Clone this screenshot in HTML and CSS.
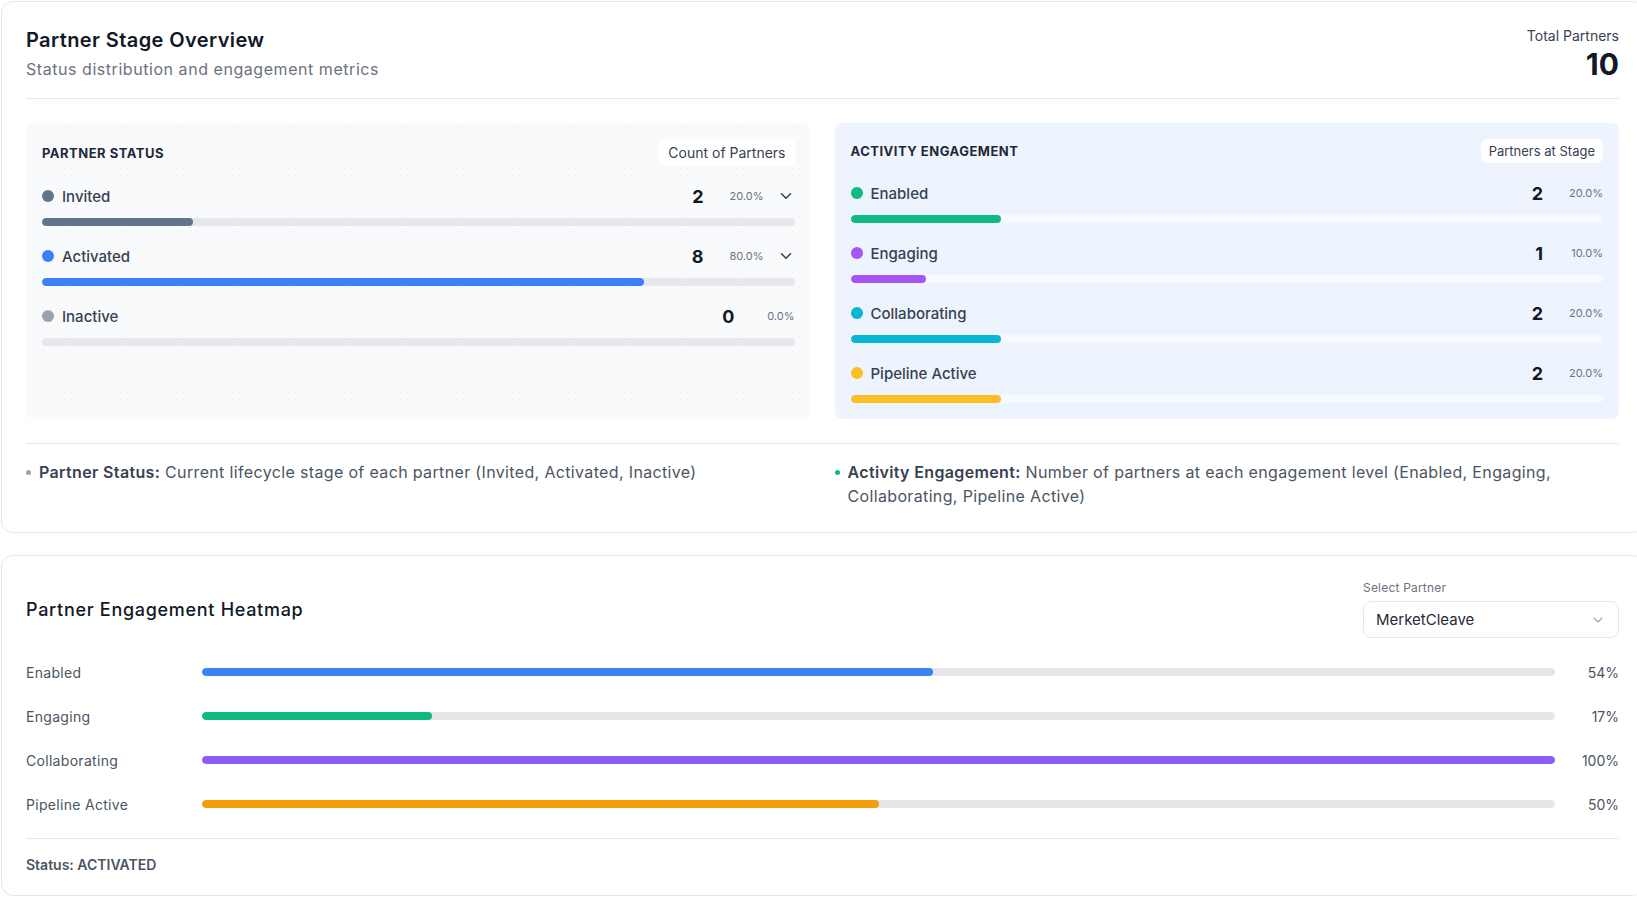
FILE: index.html
```html
<!DOCTYPE html>
<html lang="en">
<head>
<meta charset="utf-8">
<title>Partner Stage Overview</title>
<link rel="stylesheet" href="styles.css">
</head>
<body>
<div class="page">
  <section class="card overview">
    <header class="ov-header">
      <div class="ov-heading">
        <h1 class="ov-title">Partner Stage Overview</h1>
        <p class="ov-sub">Status distribution and engagement metrics</p>
      </div>
      <div class="total">
        <div class="total-label">Total Partners</div>
        <div class="total-value">10</div>
      </div>
    </header>

    <div class="panels">
      <div class="panel panel-status">
        <div class="panel-head">
          <h2 class="panel-title">PARTNER STATUS</h2>
          <span class="badge badge-lg">Count of Partners</span>
        </div>
        <div class="rows">
          <div class="stat">
            <div class="stat-line">
              <span class="dot dot-slate"></span>
              <span class="stat-name">Invited</span>
              <span class="stat-count">2</span>
              <span class="stat-pct">20.0%</span>
              <span class="chev"><svg viewBox="0 0 24 24" width="18" height="18"><path d="M6 9l6 6 6-6" fill="none" stroke="currentColor" stroke-width="2" stroke-linecap="round" stroke-linejoin="round"/></svg></span>
            </div>
            <div class="track"><div class="fill fill-slate" style="width:20%"></div></div>
          </div>
          <div class="stat">
            <div class="stat-line">
              <span class="dot dot-blue"></span>
              <span class="stat-name">Activated</span>
              <span class="stat-count">8</span>
              <span class="stat-pct">80.0%</span>
              <span class="chev"><svg viewBox="0 0 24 24" width="18" height="18"><path d="M6 9l6 6 6-6" fill="none" stroke="currentColor" stroke-width="2" stroke-linecap="round" stroke-linejoin="round"/></svg></span>
            </div>
            <div class="track"><div class="fill fill-blue" style="width:80%"></div></div>
          </div>
          <div class="stat">
            <div class="stat-line">
              <span class="dot dot-gray"></span>
              <span class="stat-name">Inactive</span>
              <span class="stat-count">0</span>
              <span class="stat-pct">0.0%</span>
            </div>
            <div class="track"><div class="fill fill-gray" style="width:0%"></div></div>
          </div>
        </div>
      </div>

      <div class="panel panel-activity">
        <div class="panel-head">
          <h2 class="panel-title">ACTIVITY ENGAGEMENT</h2>
          <span class="badge">Partners at Stage</span>
        </div>
        <div class="rows">
          <div class="stat">
            <div class="stat-line">
              <span class="dot dot-green"></span>
              <span class="stat-name">Enabled</span>
              <span class="stat-count">2</span>
              <span class="stat-pct">20.0%</span>
            </div>
            <div class="track track-light"><div class="fill fill-green" style="width:20%"></div></div>
          </div>
          <div class="stat">
            <div class="stat-line">
              <span class="dot dot-purple"></span>
              <span class="stat-name">Engaging</span>
              <span class="stat-count">1</span>
              <span class="stat-pct">10.0%</span>
            </div>
            <div class="track track-light"><div class="fill fill-purple" style="width:10%"></div></div>
          </div>
          <div class="stat">
            <div class="stat-line">
              <span class="dot dot-cyan"></span>
              <span class="stat-name">Collaborating</span>
              <span class="stat-count">2</span>
              <span class="stat-pct">20.0%</span>
            </div>
            <div class="track track-light"><div class="fill fill-cyan" style="width:20%"></div></div>
          </div>
          <div class="stat">
            <div class="stat-line">
              <span class="dot dot-amber"></span>
              <span class="stat-name">Pipeline Active</span>
              <span class="stat-count">2</span>
              <span class="stat-pct">20.0%</span>
            </div>
            <div class="track track-light"><div class="fill fill-amber" style="width:20%"></div></div>
          </div>
        </div>
      </div>
    </div>

    <div class="notes">
      <p class="note"><span class="bullet bullet-gray"></span><span class="note-text"><strong>Partner Status:</strong> Current lifecycle stage of each partner (Invited, Activated, Inactive)</span></p>
      <p class="note"><span class="bullet bullet-green"></span><span class="note-text"><strong>Activity Engagement:</strong> Number of partners at each engagement level (Enabled, Engaging, Collaborating, Pipeline Active)</span></p>
    </div>
  </section>

  <section class="card heatmap">
    <header class="hm-header">
      <h2 class="hm-title">Partner Engagement Heatmap</h2>
      <div class="picker">
        <label class="picker-label">Select Partner</label>
        <div class="select">
          <span class="select-value">MerketCleave</span>
          <svg class="select-chev" viewBox="0 0 24 24" width="16" height="16"><path d="M6 9l6 6 6-6" fill="none" stroke="currentColor" stroke-width="1.6" stroke-linecap="round" stroke-linejoin="round"/></svg>
        </div>
      </div>
    </header>
    <div class="hm-rows">
      <div class="hm-row">
        <span class="hm-label">Enabled</span>
        <div class="hm-track"><div class="hm-fill fill-blue" style="width:54%"></div></div>
        <span class="hm-pct">54%</span>
      </div>
      <div class="hm-row">
        <span class="hm-label">Engaging</span>
        <div class="hm-track"><div class="hm-fill fill-green" style="width:17%"></div></div>
        <span class="hm-pct">17%</span>
      </div>
      <div class="hm-row">
        <span class="hm-label">Collaborating</span>
        <div class="hm-track"><div class="hm-fill fill-violet" style="width:100%"></div></div>
        <span class="hm-pct">100%</span>
      </div>
      <div class="hm-row">
        <span class="hm-label">Pipeline Active</span>
        <div class="hm-track"><div class="hm-fill fill-orange" style="width:50%"></div></div>
        <span class="hm-pct">50%</span>
      </div>
    </div>
    <div class="hm-footer">Status: ACTIVATED</div>
  </section>
</div>
</body>
</html>
```

FILE: styles.css
```css
* { box-sizing: border-box; }
html { overflow: hidden; }
body {
  margin: 0;
  background: #ffffff;
  font-family: Inter, "Noto Sans", "Liberation Sans", sans-serif;
  color: #111827;
}
.page {
  width: 1644px;
  padding: 1px 0 0 1px;
  display: flex;
  flex-direction: column;
  gap: 22px;
}
.card {
  background: #ffffff;
  border: 1px solid #e5e7eb;
  border-radius: 12px;
  padding: 24px;
}

/* ---------- overview header ---------- */
.ov-header {
  display: flex;
  justify-content: space-between;
  align-items: flex-start;
  padding-bottom: 16px;
  border-bottom: 1px solid #e5e7eb;
}
.ov-title {
  margin: 0;
  font-size: 20px;
  line-height: 28px;
  font-weight: 600;
  letter-spacing: 0.4px;
  color: #111827;
}
.ov-sub {
  margin: 3px 0 0;
  font-size: 16px;
  line-height: 24px;
  letter-spacing: 0.55px;
  color: #6b7280;
}
.total { text-align: right; }
.total-label {
  font-size: 14px;
  line-height: 20px;
  color: #374151;
}
.total-value {
  font-size: 30px;
  line-height: 36px;
  font-weight: 700;
  color: #111827;
}

/* ---------- panels ---------- */
.panels {
  margin-top: 24px;
  display: grid;
  grid-template-columns: 1fr 1fr;
  gap: 24px;
}
.panel {
  border-radius: 8px;
  padding: 16px;
}
.panel-status {
  background-color: #f9fafb;
  background-image: radial-gradient(circle, rgba(209, 213, 219, 0.35) 0.8px, transparent 1px);
  background-size: 7px 7px;
}
.panel-activity {
  background: #eef4fe;
}
.panel-head {
  display: flex;
  justify-content: space-between;
  align-items: center;
}
.panel-title {
  margin: 0;
  font-size: 13px;
  font-weight: 700;
  letter-spacing: 0.5px;
  color: #1f2937;
}
.badge {
  background: #ffffff;
  border-radius: 6px;
  font-size: 13px;
  line-height: 16px;
  padding: 4px 8px;
  color: #374151;
}
.badge-lg {
  font-size: 14px;
  line-height: 19px;
  padding: 4px 9px;
}
.rows {
  margin-top: 18px;
  display: flex;
  flex-direction: column;
  gap: 18px;
}
.stat-line {
  display: flex;
  align-items: center;
  height: 24px;
}
.dot {
  width: 12px;
  height: 12px;
  border-radius: 50%;
  flex: none;
}
.dot-slate { background: #64748b; }
.dot-blue { background: #3b82f6; }
.dot-gray { background: #9ca3af; }
.dot-green { background: #10b981; }
.dot-purple { background: #a855f7; }
.dot-cyan { background: #06b6d4; }
.dot-amber { background: #fbbf24; }
.stat-name {
  margin-left: 8px;
  flex: 1;
  font-size: 15px;
  font-weight: 500;
  color: #374151;
}
.stat-count {
  font-size: 18px;
  font-weight: 700;
  color: #111827;
}
.stat-pct {
  min-width: 40px;
  margin-left: 20px;
  text-align: right;
  font-size: 11px;
  color: #6b7280;
}
.chev {
  width: 18px;
  height: 18px;
  margin-left: 13px;
  color: #374151;
  display: flex;
}
.track {
  margin-top: 10px;
  height: 8px;
  border-radius: 4px;
  background: #e5e7eb;
  overflow: hidden;
}
.track-light { background: #f6f9ff; }
.fill {
  height: 100%;
  border-radius: 4px;
}
.fill-slate { background: #64748b; }
.fill-blue { background: #3b82f6; }
.fill-gray { background: #9ca3af; }
.fill-green { background: #10b981; }
.fill-purple { background: #a855f7; }
.fill-cyan { background: #06b6d4; }
.fill-amber { background: #fbbf24; }
.fill-violet { background: #8b5cf6; }
.fill-orange { background: #f59e0b; }

/* ---------- notes ---------- */
.notes {
  margin-top: 24px;
  border-top: 1px solid #e5e7eb;
  padding-top: 16px;
  display: grid;
  grid-template-columns: 1fr 1fr;
  gap: 24px;
}
.note {
  margin: 0;
  display: flex;
  align-items: flex-start;
  gap: 8px;
  font-size: 16px;
  line-height: 24px;
  letter-spacing: 0.35px;
  color: #4b5563;
}
.note strong {
  font-weight: 600;
  color: #374151;
}
.bullet {
  flex: none;
  width: 5px;
  height: 5px;
  border-radius: 50%;
  margin-top: 10px;
}
.bullet-gray { background: #9ca3af; }
.bullet-green { background: #10b981; }

/* ---------- heatmap ---------- */
.heatmap { padding-bottom: 20px; }
.hm-header {
  display: flex;
  justify-content: space-between;
  align-items: center;
}
.hm-title {
  margin: 0;
  font-size: 18px;
  font-weight: 500;
  letter-spacing: 0.7px;
  color: #111827;
}
.picker {
  width: 256px;
  display: flex;
  flex-direction: column;
  gap: 5px;
}
.picker-label {
  font-size: 12px;
  line-height: 16px;
  letter-spacing: 0.2px;
  color: #6b7280;
}
.select {
  height: 37px;
  border: 1px solid #e5e7eb;
  border-radius: 8px;
  padding: 0 12px;
  display: flex;
  align-items: center;
  justify-content: space-between;
}
.select-value {
  font-size: 15px;
  color: #1f2937;
}
.select-chev { color: #9ca3af; }
.hm-rows {
  margin-top: 24px;
  display: flex;
  flex-direction: column;
  gap: 24px;
}
.hm-row {
  display: grid;
  grid-template-columns: 160px 1fr 48px;
  gap: 16px;
  align-items: center;
  height: 20px;
}
.hm-label {
  font-size: 14px;
  letter-spacing: 0.3px;
  color: #4b5563;
}
.hm-track {
  height: 8px;
  border-radius: 4px;
  background: #e5e7eb;
  overflow: hidden;
}
.hm-fill {
  height: 100%;
  border-radius: 4px;
}
.hm-pct {
  text-align: right;
  font-size: 14px;
  color: #4b5563;
}
.hm-footer {
  margin-top: 24px;
  border-top: 1px solid #e5e7eb;
  padding-top: 16px;
  font-size: 14px;
  line-height: 20px;
  font-weight: 600;
  color: #4b5563;
}
```
